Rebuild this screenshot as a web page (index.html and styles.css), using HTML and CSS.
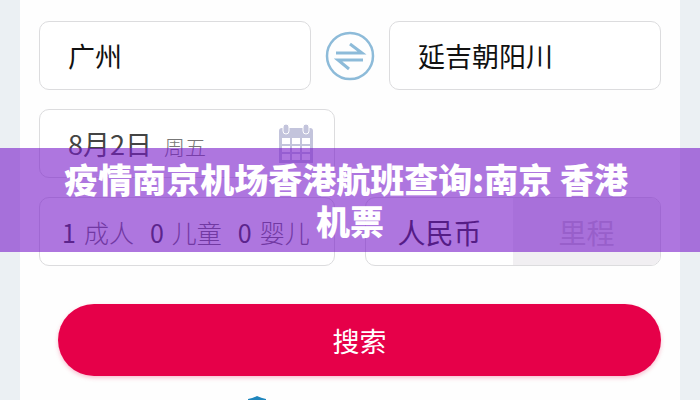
FILE: index.html
```html
<!DOCTYPE html>
<html lang="zh-CN">
<head>
<meta charset="utf-8">
<title>航班查询</title>
<link rel="stylesheet" href="styles.css">
</head>
<body>
<main class="page">
  <form class="search">
    <div class="route">
      <input class="box city" type="text" value="广州" aria-label="出发城市">
      <button class="swap" type="button" aria-label="交换城市">
        <svg viewBox="0 0 50 50" fill="none" stroke="#8dbbd9">
          <circle cx="25" cy="25" r="23" stroke-width="2.5"/>
          <path d="M11 22H37L25 13M38 29H13L24 38" stroke-width="3"/>
        </svg>
      </button>
      <input class="box city" type="text" value="延吉朝阳川" aria-label="到达城市">
    </div>
    <div class="halves">
      <button class="box date" type="button">
        <span class="when">
          <span class="day">8月2日</span>
          <span class="weekday">周五</span>
        </span>
        <svg class="calendar" viewBox="0 0 36 40">
          <path d="M1 7Q1 4 4 4H32Q35 4 35 7V39H1Z" fill="#c3c4dc"/>
          <path d="M4 14H12V20H4ZM14 14H22V20H14ZM24 14H32V20H24ZM4 22H12V28H4ZM14 22H22V28H14ZM24 22H32V28H24ZM4 30H12V36H4ZM14 30H22V36H14ZM24 30H32V36H24Z" fill="#fff"/>
          <rect x="5" y="0" width="6" height="10" rx="3" fill="#c3c4dc" stroke="#fff"/>
          <rect x="25" y="0" width="6" height="10" rx="3" fill="#c3c4dc" stroke="#fff"/>
        </svg>
      </button>
    </div>
    <div class="halves">
      <button class="box guests" type="button">
        <span class="guest"><b>1</b>成人</span>
        <span class="guest"><b>0</b>儿童</span>
        <span class="guest"><b>0</b>婴儿</span>
      </button>
      <div class="box currency">
        <button class="option" type="button" aria-pressed="true">人民币</button>
        <button class="option muted" type="button" aria-pressed="false">里程</button>
      </div>
    </div>
    <button class="submit" type="submit">搜索</button>
  </form>
  <div class="secure">
    <svg class="shield" viewBox="0 0 18 20"><path d="M9 0Q13 2 18 3V10Q17 17 9 20Q1 17 0 10V3Q5 2 9 0Z" fill="#1f86bd"/></svg>
  </div>
</main>
<h1 class="banner">疫情南京机场香港航班查询:南京 香港 机票</h1>
</body>
</html>
```
FILE: styles.css
```css
* { box-sizing: border-box; }

body {
  margin: 0;
  height: 100vh;
  overflow: hidden;
  position: relative;
  background: #ebf0f3;
  font-family: "Noto Sans CJK SC", sans-serif;
}

button, input {
  font: inherit;
  color: inherit;
  margin: 0;
}

.page {
  margin: 0 20px;
  padding: 21px 19px 0;
  min-height: 100vh;
  background: #fefefe;
}

.search {
  display: grid;
  gap: 19px;
}

.route {
  display: grid;
  grid-template-columns: 1fr 50px 1fr;
  gap: 14px;
  align-items: center;
}

.halves {
  display: grid;
  grid-template-columns: 1fr 1fr;
  gap: 30px;
}

.box {
  width: 100%;
  min-width: 0;
  height: 69px;
  border: 1px solid #dcdcde;
  border-radius: 10px;
  background: #fff;
}

.city {
  padding: 0 28px;
  font-size: 27px;
  color: #111;
}

.swap {
  width: 50px;
  height: 50px;
  padding: 0;
  border: 0;
  background: none;
}

.swap svg {
  display: block;
}

.date {
  display: flex;
  align-items: center;
  justify-content: space-between;
  padding: 0 20px 0 28px;
}

.when {
  display: flex;
  align-items: baseline;
  gap: 12px;
}

.day {
  font-size: 27px;
  color: #444;
}

.weekday {
  font-size: 21px;
  font-weight: 300;
  color: #777;
}

.calendar {
  width: 36px;
  height: 40px;
}

.guests {
  display: flex;
  align-items: center;
  gap: 16px;
  padding: 0 22px;
  font-size: 25px;
  font-weight: 300;
  color: #666;
  white-space: nowrap;
}

.guest {
  display: flex;
  gap: 8px;
}

.guests b {
  font-weight: 400;
  color: #333;
}

.currency {
  display: grid;
  grid-template-columns: 1fr 1fr;
  overflow: hidden;
}

.option {
  padding: 0;
  border: 0;
  background: none;
  font-size: 28px;
  color: #222;
}

.muted {
  background: #f1eff2;
  color: #c8c5cb;
}

.submit {
  height: 72px;
  margin: 19px 0 0 19px;
  border: 0;
  border-radius: 36px;
  background: #e60049;
  box-shadow: 0 2px 4px #e6004940;
  font-size: 27px;
  color: #fff;
}

.secure {
  padding: 20px 0 0 209px;
}

.shield {
  display: block;
  width: 18px;
  height: 20px;
}

.banner {
  position: absolute;
  top: 148px;
  left: 0;
  right: 0;
  margin: 0;
  padding: 10px 50px;
  background: rgb(120 27 202 / 60%);
  color: #fff;
  font-size: 34px;
  font-weight: 900;
  line-height: 42px;
  text-align: center;
  white-space: break-spaces;
}
```
